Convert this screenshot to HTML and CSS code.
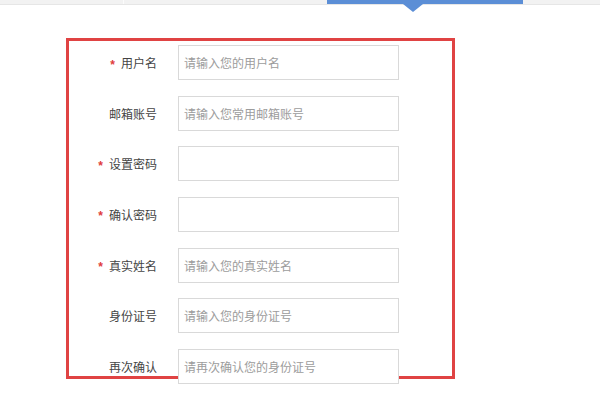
FILE: index.html
```html
<!DOCTYPE html>
<html lang="zh-CN">
<head>
<meta charset="utf-8">
<title>注册</title>
<link rel="stylesheet" href="styles.css">
</head>
<body>
<nav class="tabs">
  <div class="tab tab-first"></div>
  <div class="tab tab-second"></div>
  <div class="tab tab-active"></div>
  <div class="tab tab-rest"></div>
</nav>
<main class="page">
  <form class="reg-form">
    <div class="row">
      <label class="label"><span class="req">*</span>用户名</label>
      <input class="field" type="text" placeholder="请输入您的用户名">
    </div>
    <div class="row">
      <label class="label">邮箱账号</label>
      <input class="field" type="text" placeholder="请输入您常用邮箱账号">
    </div>
    <div class="row">
      <label class="label"><span class="req">*</span>设置密码</label>
      <input class="field" type="password">
    </div>
    <div class="row">
      <label class="label"><span class="req">*</span>确认密码</label>
      <input class="field" type="password">
    </div>
    <div class="row">
      <label class="label"><span class="req">*</span>真实姓名</label>
      <input class="field" type="text" placeholder="请输入您的真实姓名">
    </div>
    <div class="row">
      <label class="label">身份证号</label>
      <input class="field" type="text" placeholder="请输入您的身份证号">
    </div>
    <div class="row">
      <label class="label">再次确认</label>
      <input class="field" type="text" placeholder="请再次确认您的身份证号">
    </div>
  </form>
</main>
</body>
</html>
```

FILE: styles.css
```css
* {
  box-sizing: border-box;
}

html, body {
  margin: 0;
  padding: 0;
  background: #ffffff;
}

body {
  width: 600px;
  height: 399px;
  overflow: hidden;
  font-family: "Noto Sans CJK SC", "Noto Sans", "Liberation Sans", sans-serif;
  font-size: 12px;
  color: #444444;
}

.tabs {
  display: flex;
  height: 5px;
  background: #f2f2f2;
  border-bottom: 1px solid #e6e6e6;
}

.tab {
  height: 4px;
}

.tab-first {
  width: 124px;
  border-right: 1px solid #fbfbfb;
}

.tab-second {
  width: 203px;
}

.tab-active {
  position: relative;
  width: 196px;
  background: #5b8ed6;
}

.tab-active::after {
  content: "";
  position: absolute;
  left: 76px;
  top: 4px;
  width: 0;
  height: 0;
  border-left: 10px solid transparent;
  border-right: 10px solid transparent;
  border-top: 8px solid #5b8ed6;
}

.tab-rest {
  flex: 1;
}

.page {
  padding: 33px 0 0 66px;
}

.reg-form {
  width: 389px;
  height: 341px;
  border: 3px solid #e04343;
  padding-top: 4px;
  display: flex;
  flex-direction: column;
  gap: 15.67px;
}

.row {
  display: flex;
  align-items: center;
  height: 35px;
  flex: none;
}

.label {
  width: 88px;
  margin-right: 21px;
  display: flex;
  justify-content: flex-end;
  align-items: center;
  font-size: 12px;
  color: #444444;
  white-space: nowrap;
}

.req {
  color: #e03c3c;
  font-family: "Liberation Sans", sans-serif;
  font-weight: bold;
  font-size: 12px;
  line-height: 12px;
  padding-top: 4px;
  margin-right: 6px;
}

.field {
  width: 221px;
  height: 35px;
  border: 1px solid #d9d9d9;
  padding: 0 5px;
  margin: 0;
  font-family: "Noto Sans CJK SC", "Noto Sans", "Liberation Sans", sans-serif;
  font-size: 12px;
  color: #444444;
  background: #ffffff;
  outline: none;
}

.field::placeholder {
  color: #9c9c9c;
}
```
